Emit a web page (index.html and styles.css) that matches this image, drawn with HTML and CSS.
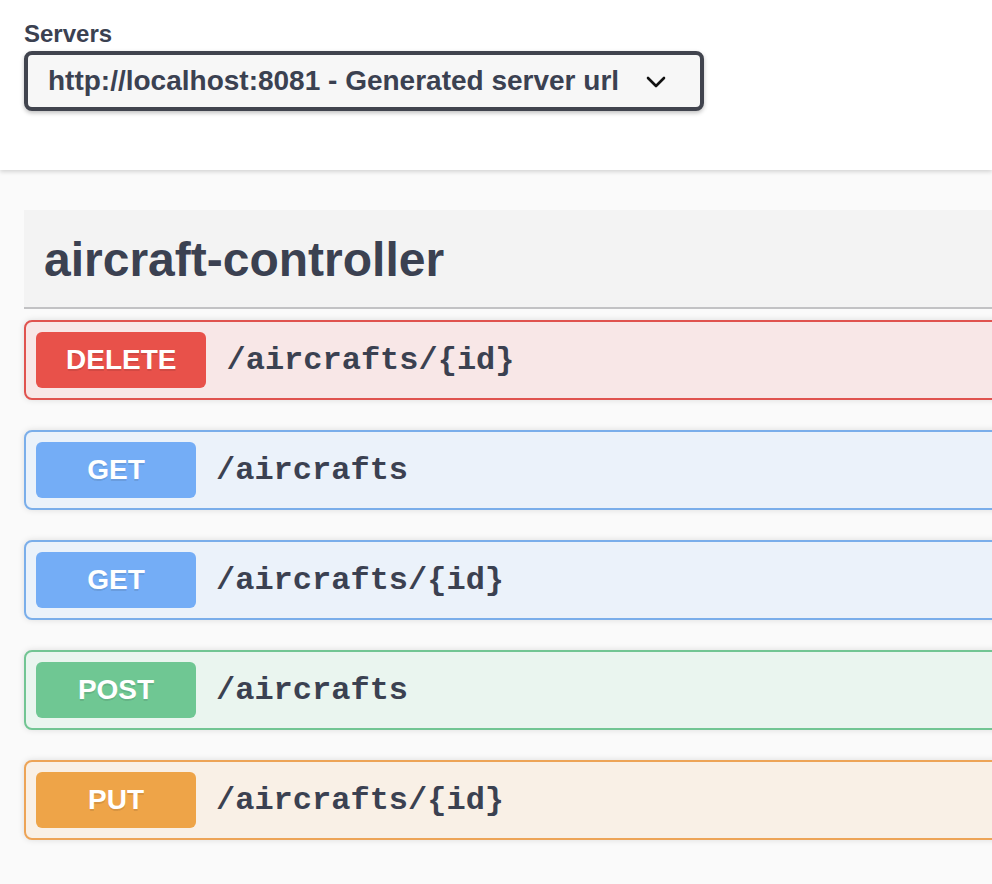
FILE: index.html
```html
<!DOCTYPE html>
<html lang="en">
<head>
<meta charset="utf-8">
<title>Swagger UI</title>
<link rel="stylesheet" href="styles.css">
</head>
<body>
<div class="scheme-container">
  <div class="servers">
    <div class="servers-title">Servers</div>
    <div class="select">
      <span class="select-text">http://localhost:8081 - Generated server url</span>
      <svg class="chevron" width="20" height="12" viewBox="0 0 20 12"><path d="M2 2 L10 10 L18 2" fill="none" stroke="#111" stroke-width="2.6" stroke-linecap="round" stroke-linejoin="round"/></svg>
    </div>
  </div>
</div>
<div class="wrapper">
  <div class="tag-section">
    <h3 class="opblock-tag">aircraft-controller</h3>
    <div class="opblock opblock-delete">
      <span class="method">DELETE</span>
      <span class="path">/aircrafts/{id}</span>
    </div>
    <div class="opblock opblock-get">
      <span class="method">GET</span>
      <span class="path">/aircrafts</span>
    </div>
    <div class="opblock opblock-get">
      <span class="method">GET</span>
      <span class="path">/aircrafts/{id}</span>
    </div>
    <div class="opblock opblock-post">
      <span class="method">POST</span>
      <span class="path">/aircrafts</span>
    </div>
    <div class="opblock opblock-put">
      <span class="method">PUT</span>
      <span class="path">/aircrafts/{id}</span>
    </div>
  </div>
</div>
</body>
</html>
```
FILE: styles.css
```css
html, body {
  margin: 0;
  padding: 0;
  overflow: hidden;
}
body {
  background: #fafafa;
  font-family: "Liberation Sans", Arial, sans-serif;
  color: #3b4151;
  width: 992px;
  height: 884px;
}
.scheme-container {
  background: #fff;
  box-shadow: 0 2px 4px 0 rgba(0, 0, 0, 0.15);
  height: 170px;
  box-sizing: border-box;
  padding: 20px 24px 0;
}
.servers {
  display: flex;
  flex-direction: column;
  align-items: flex-start;
}
.servers-title {
  font-size: 24px;
  font-weight: 700;
  line-height: 28px;
}
.select {
  margin-top: 3px;
  width: 680px;
  height: 60px;
  box-sizing: border-box;
  border: 4px solid #41444e;
  border-radius: 8px;
  background: #f7f7f7;
  box-shadow: 0 2px 4px 0 rgba(0, 0, 0, 0.25);
  display: flex;
  align-items: center;
  justify-content: space-between;
  padding: 0 34px 0 20px;
}
.select-text {
  font-size: 28px;
  font-weight: 700;
  line-height: 32px;
  color: #3b4151;
}
.chevron {
  display: block;
  margin-top: 1px;
}
.wrapper {
  padding: 40px 0 0 24px;
}
.tag-section {
  width: 1200px;
}
.opblock-tag {
  margin: 0 0 11px;
  background: #f3f3f3;
  border-bottom: 2px solid #c2c2c4;
  padding: 22px 40px 19px 20px;
  font-size: 48px;
  font-weight: 700;
  line-height: 56px;
  color: #3b4151;
}
.opblock {
  display: flex;
  align-items: center;
  height: 80px;
  box-sizing: border-box;
  border: 2px solid;
  border-radius: 8px;
  padding: 0 10px;
  margin-bottom: 30px;
  box-shadow: 0 0 6px rgba(0, 0, 0, 0.12);
}
.method {
  min-width: 160px;
  box-sizing: border-box;
  height: 56px;
  line-height: 56px;
  padding: 0 30px;
  border-radius: 6px;
  text-align: center;
  color: #fff;
  font-size: 28px;
  font-weight: 700;
  text-shadow: 0 2px 0 rgba(0, 0, 0, 0.1);
}
.path {
  margin-left: 20px;
  font-family: "Liberation Mono", "Courier New", monospace;
  font-weight: 700;
  font-size: 32px;
  color: #3b4151;
}
.opblock-delete {
  background: #f8e7e7;
  border-color: #e0534f;
}
.opblock-delete .method {
  background: #e8514a;
}
.opblock-get {
  background: #ebf2fa;
  border-color: #7aaeea;
}
.opblock-get .method {
  background: #74adf6;
}
.opblock-post {
  background: #eaf5ef;
  border-color: #72c593;
}
.opblock-post .method {
  background: #6fc793;
}
.opblock-put {
  background: #f9f0e6;
  border-color: #eda457;
}
.opblock-put .method {
  background: #eea448;
}
```
